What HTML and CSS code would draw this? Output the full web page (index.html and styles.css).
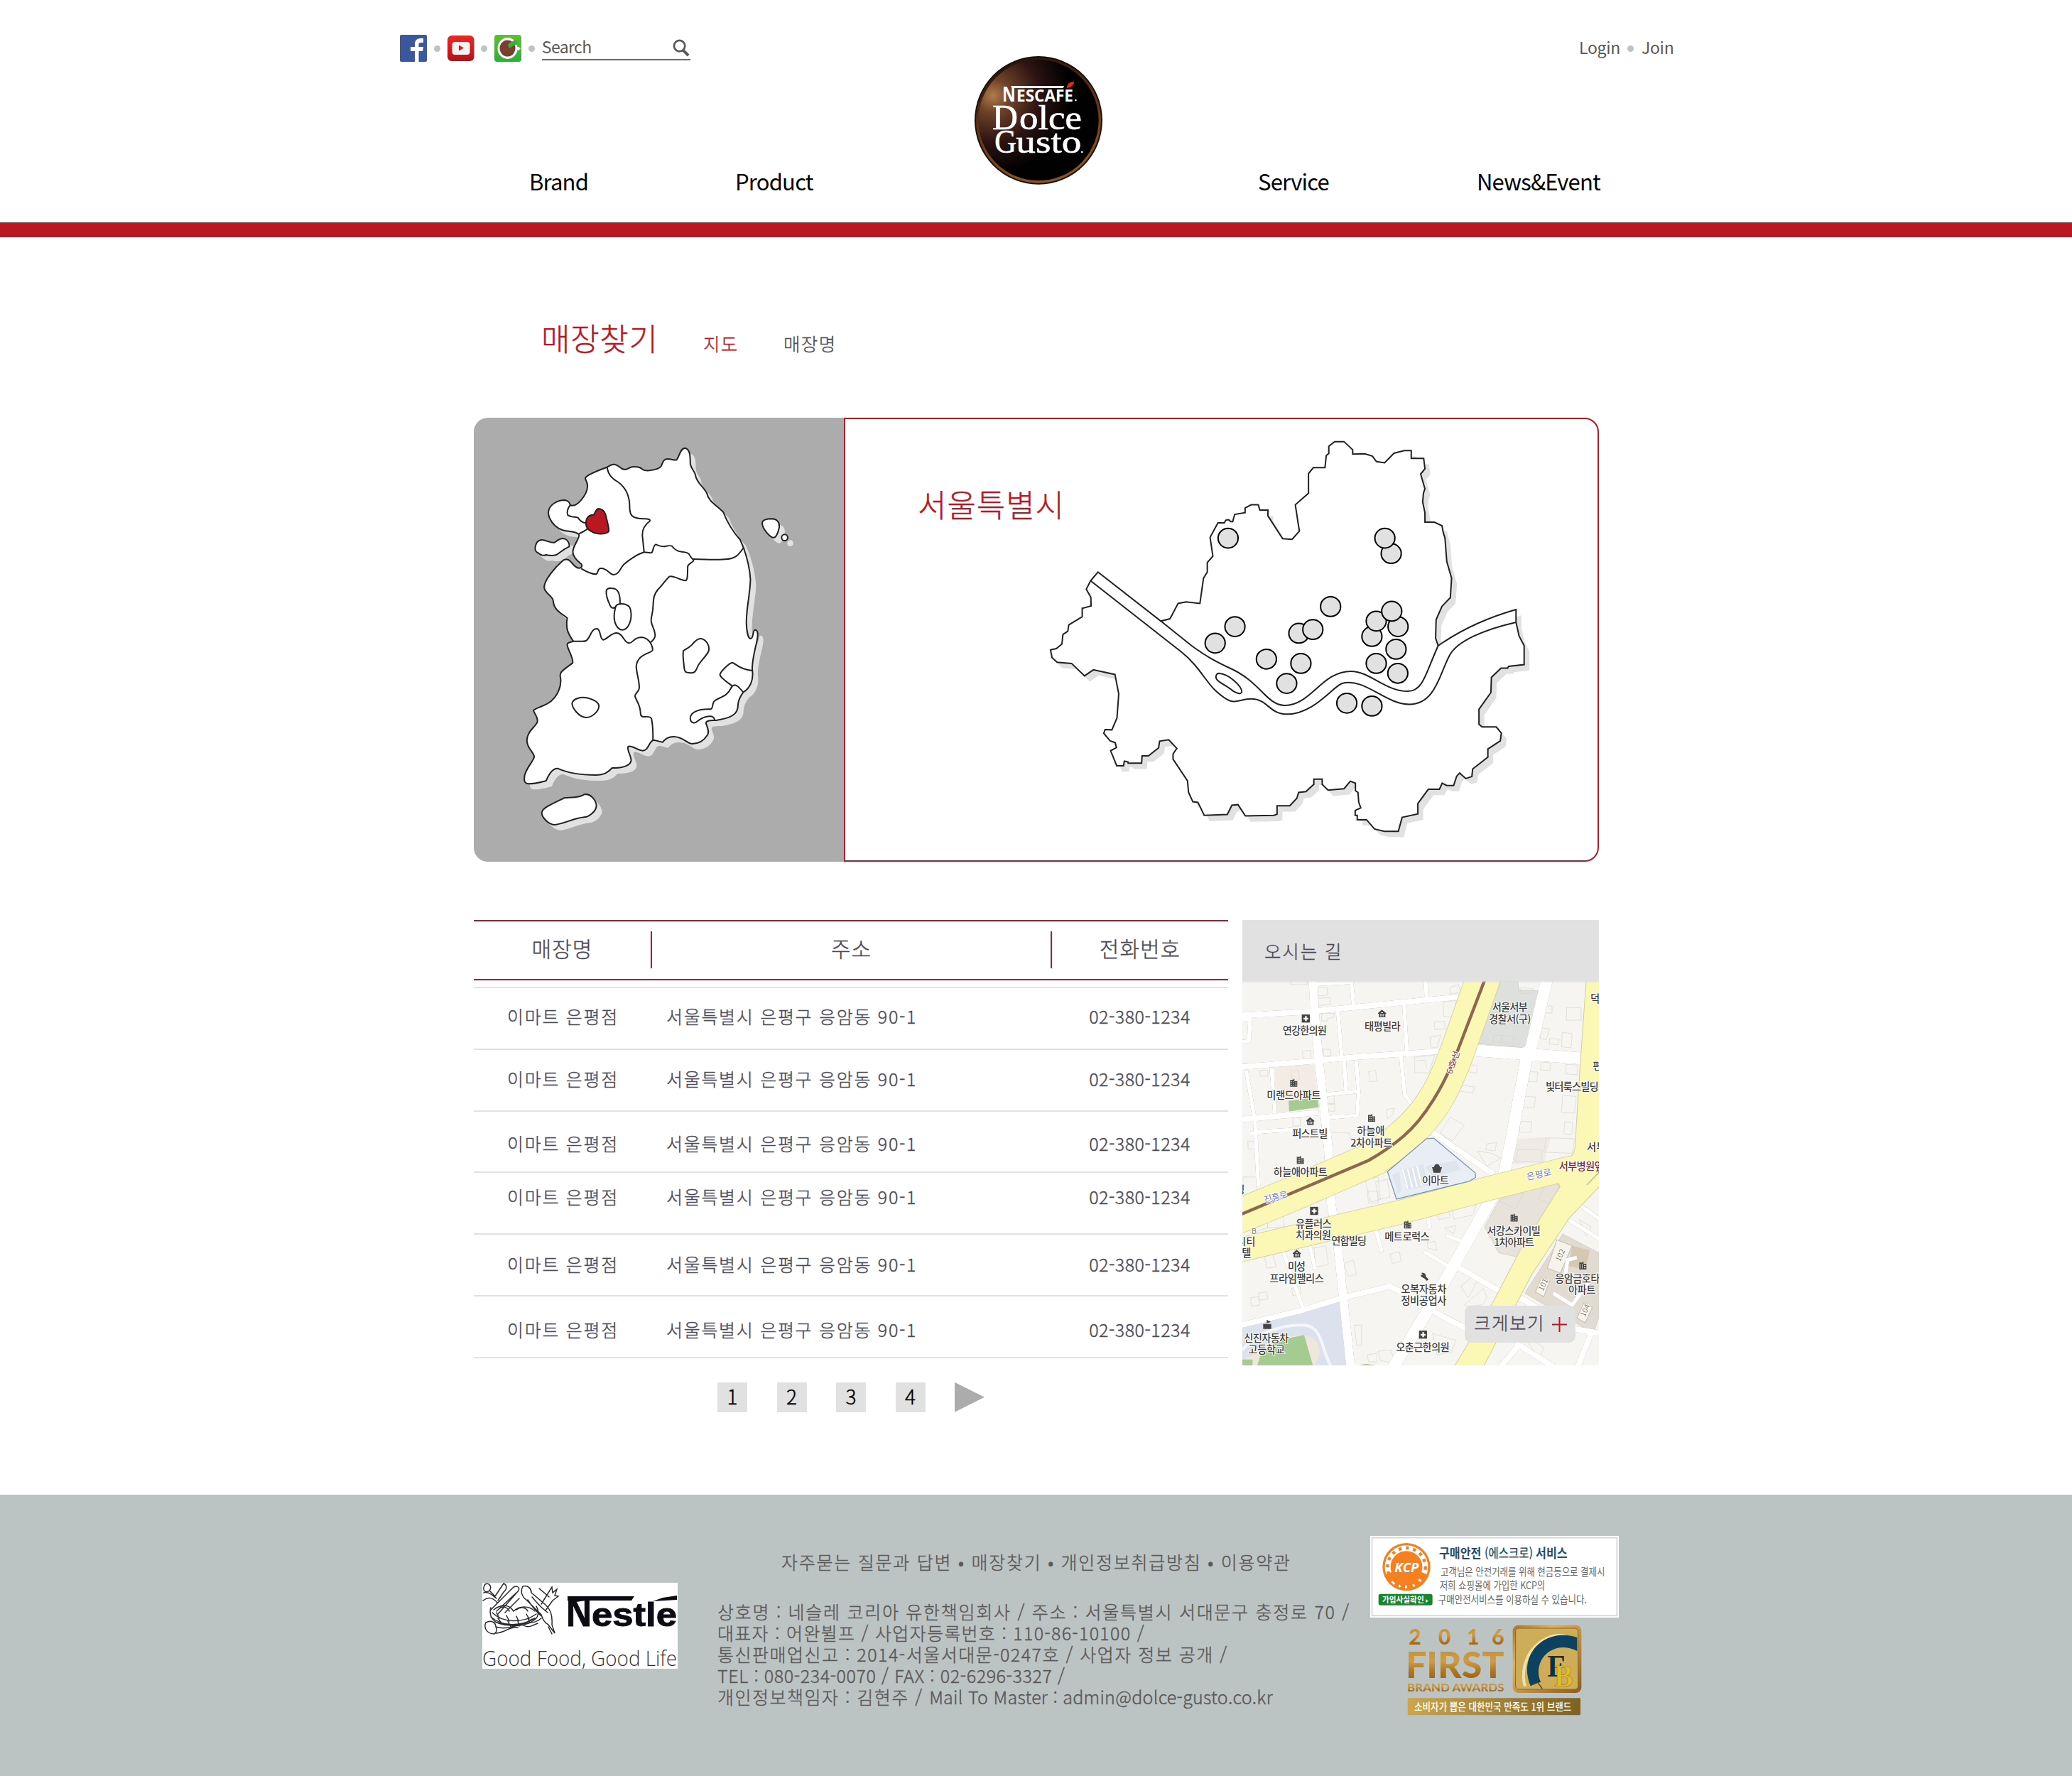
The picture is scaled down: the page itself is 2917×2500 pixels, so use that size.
FILE: index.html
```html
<!DOCTYPE html>
<html lang="ko">
<head>
<meta charset="utf-8">
<title>매장찾기 - NESCAFÉ Dolce Gusto</title>
<link rel="stylesheet" href="styles.css">
</head>
<body>
<header class="header">
  <div class="header-left">
    <div class="utility">
      <a class="social" href="#"><svg viewBox="0 0 38 38"><rect width="38" height="38" rx="2" fill="#3b579d"/><path d="M21 38V23h-6v-6h6v-4c0-5 3-8 8-8h4v6h-3c-3 0-3.500 1-3.500 3v3H33l-1 6h-5.500v15z" fill="#fff"/></svg></a>
      <i class="dot"></i>
      <a class="social" href="#"><svg viewBox="0 0 38 38"><defs><linearGradient id="yt" x2="0" y2="1"><stop stop-color="#e32c28"/><stop offset="1" stop-color="#b31217"/></linearGradient></defs><rect y="1" width="37.500" height="36" rx="6" fill="url(#yt)"/><rect x="6.500" y="10" width="25" height="18" rx="4" fill="#f3f1f1"/><path d="M16 14.500v8l7-4z" fill="#d3201f"/></svg></a>
      <i class="dot"></i>
      <a class="social" href="#"><svg viewBox="0 0 38 38"><defs><linearGradient id="cafe" x2="0" y2="1"><stop stop-color="#62bd35"/><stop offset="1" stop-color="#2fae3b"/></linearGradient></defs><rect width="38" height="38" rx="4" fill="url(#cafe)"/><path d="M30 17h4l3 2-3 3h-4z" fill="#fff"/><ellipse cx="18.500" cy="19" rx="14" ry="15" fill="#fff"/><ellipse cx="18.500" cy="19" rx="11" ry="11.500" fill="#7b3f31"/><path d="M19 14c4-4 7-6 12-7l1 7-5 1-6 4z" fill="#3fae35"/></svg></a>
      <i class="dot"></i>
      <div class="search"><span>Search</span><svg viewBox="0 0 26 26"><circle cx="10" cy="10" r="8" fill="none" stroke="#595757" stroke-width="2.800"/><path d="M15 16l8 8" stroke="#595757" stroke-width="4.200"/></svg></div>
    </div>
    <nav class="nav"><a class="brand" href="#">Brand</a><a class="product" href="#">Product</a></nav>
  </div>
  <svg class="logo" viewBox="97 57 540 543">
    <defs>
      <radialGradient id="ball" cx=".13" cy=".3" r=".62"><stop stop-color="#b07a4c"/><stop offset=".22" stop-color="#6f4328"/><stop offset=".6" stop-color="#2e1413"/><stop offset="1" stop-color="#020101"/></radialGradient>
      <linearGradient id="rim" x2=".3" y2="1"><stop stop-color="#1b0d09"/><stop offset=".5" stop-color="#5b3216"/><stop offset="1" stop-color="#8c5423"/></linearGradient>
    </defs>
    <ellipse cx="367" cy="328" rx="270" ry="271" fill="#1a0e0a"/>
    <ellipse cx="367" cy="328" rx="259" ry="260" fill="url(#ball)" stroke="url(#rim)" stroke-width="10"/>
    <g fill="#fff">
      <g font-family="Open Sans, sans-serif" font-weight="700"><text x="214" y="248" font-size="88" textLength="56" lengthAdjust="spacingAndGlyphs">N</text><text x="274" y="248" font-size="70" textLength="240" lengthAdjust="spacingAndGlyphs">ESCAFE</text></g>
      <path d="M250 183h226l-6 9H256z"/>
      <path d="M486 192c2-18 12-27 32-28-3 16-12 25-32 28z" fill="#e3261f"/>
      <circle cx="524" cy="243" r="4"/>
      <g font-family="Liberation Serif, serif" stroke="#fff" stroke-width="2">
        <text x="172" y="366" font-size="152" textLength="108" lengthAdjust="spacingAndGlyphs">D</text><text x="286" y="366" font-size="146" textLength="264" lengthAdjust="spacingAndGlyphs">olce</text>
        <text x="182" y="466" font-size="140" textLength="92" lengthAdjust="spacingAndGlyphs">G</text><text x="272" y="466" font-size="142" textLength="276" lengthAdjust="spacingAndGlyphs">usto</text>
      </g>
      <circle cx="551" cy="462" r="4"/>
    </g>
  </svg>
  <div class="header-right">
    <div class="account"><a href="#">Login</a><i class="dot"></i><a href="#">Join</a></div>
    <nav class="nav"><a class="service" href="#">Service</a><a class="news" href="#">News&amp;Event</a></nav>
  </div>
</header>

<main class="main">
  <div class="heading"><h1>매장찾기</h1><a class="active" href="#">지도</a><a href="#">매장명</a></div>

  <section class="finder">
    <svg class="korea" viewBox="19.600 504 1458.800 1875" preserveAspectRatio="none">
      <defs><g id="land">
        <path d="M545,713C555,705 565,700 575,701C595,705 598,723 615,723C630,722 632,711 650,711C672,711 677,715 685,722C692,728 700,728 712,727C735,724 750,720 758,709C765,695 765,678 785,678C800,679 815,687 820,681C830,668 833,633 852,632C872,636 873,665 873,700C878,722 890,730 893,745C895,775 925,795 938,822C945,860 980,875 1003,903C1020,950 1045,990 1070,1020L1083,1053C1100,1105 1108,1150 1110,1185C1110,1215 1106,1235 1104,1260C1097,1310 1094,1340 1094,1370C1095,1400 1100,1435 1110,1437C1124,1437 1118,1400 1128,1400C1140,1400 1142,1420 1134,1455C1117,1530 1116,1560 1118,1575C1122,1610 1110,1645 1082,1663C1070,1680 1063,1695 1061,1715C1062,1750 1045,1770 975,1782C955,1783 935,1780 935,1795C940,1812 950,1830 940,1845C925,1870 905,1881 880,1881C860,1881 845,1851 808,1851C785,1851 775,1860 764,1874C750,1872 735,1865 728,1866C710,1868 710,1910 685,1910C665,1908 640,1885 628,1893C622,1905 641,1935 640,1952C635,1975 605,1983 565,1983C550,2000 535,2013 500,2013C440,2013 395,2007 350,1985C330,1985 315,2010 305,2037C280,2045 255,2050 235,2050C218,2048 217,2035 220,2015C225,1985 258,1950 258,1935C255,1915 229,1900 229,1867C229,1830 260,1812 270,1790C275,1770 255,1748 255,1740C260,1730 300,1723 325,1700C350,1678 365,1640 362,1605C355,1580 365,1575 409,1540C415,1520 385,1475 388,1460C390,1452 405,1452 412,1448C395,1420 380,1400 388,1350C375,1335 335,1320 333,1280C333,1255 300,1250 297,1220C297,1190 340,1135 372,1106C395,1095 400,1112 410,1122C422,1137 430,1141 438,1139C450,1133 447,1122 438,1117C425,1105 410,1090 410,1070C410,1045 440,1010 434,997C415,975 375,995 340,960C320,940 312,915 314,900C318,870 350,852 378,852C395,854 397,865 400,873C425,885 467,830 468,793C468,770 456,765 460,757C470,742 510,727 545,713Z"/>
        <path d="M288,2170C290,2150 340,2130 375,2110C400,2107 440,2110 455,2095C480,2090 503,2120 503,2145C500,2170 470,2190 455,2191C415,2195 375,2218 340,2223C315,2223 285,2190 288,2170Z"/>
        <path d="M262,1050C265,1030 275,1020 290,1020C310,1022 325,1037 340,1030C355,1015 370,1012 378,1016C390,1020 397,1035 396,1048C370,1060 360,1075 345,1083C330,1088 315,1086 305,1083C295,1088 283,1083 275,1076C262,1070 261,1062 262,1050Z"/>
        <path d="M1157,950C1155,935 1175,931 1195,931C1215,932 1225,945 1224,965C1220,985 1212,1005 1205,1010C1190,1015 1155,970 1157,950Z"/>
        <ellipse cx="1245" cy="1010" rx="12" ry="13"/>
      </g></defs>
      <use href="#land" x="22" y="24" fill="#e1e1e1"/>
      <g class="ink">
        <use href="#land" fill="#fff"/>
        <path d="M400,873C390,885 385,905 390,915C400,925 420,922 430,926C437,935 443,948 462,948M434,995C440,988 460,985 467,972"/>
        <path d="M545,713C550,750 570,765 590,777C625,805 634,840 634,880C634,915 640,930 690,931C705,930 720,934 712,942C695,955 684,970 684,1000L691,1072"/>
        <path d="M443,1141C465,1155 485,1165 502,1165C512,1160 505,1142 520,1140C545,1138 555,1167 570,1167C595,1165 595,1140 612,1123C630,1105 665,1080 691,1072C705,1073 718,1077 722,1073C728,1060 728,1042 737,1039C750,1045 765,1050 775,1047C790,1043 800,1042 804,1050C815,1065 825,1069 840,1070C860,1072 868,1077 870,1083C876,1100 890,1103 885,1109C875,1120 863,1122 863,1133C862,1155 864,1190 855,1192C835,1192 805,1168 790,1175C775,1190 760,1215 745,1230C730,1250 728,1265 727,1290C726,1340 716,1345 719,1365C722,1385 737,1405 734,1428C732,1440 725,1445 718,1452"/>
        <path d="M885,1101C930,1103 980,1104 1010,1102C1055,1100 1065,1080 1083,1053"/>
        <path d="M412,1448C440,1448 455,1450 462,1446C480,1435 480,1395 505,1395C522,1398 515,1440 530,1442C545,1440 560,1413 583,1413C610,1415 610,1455 632,1456C648,1455 650,1432 680,1431C700,1432 722,1450 725,1485C720,1500 663,1500 660,1555C662,1590 672,1610 672,1645C670,1665 655,1665 655,1680C660,1700 677,1715 677,1755C680,1780 712,1755 720,1775C727,1810 726,1840 726,1866"/>
        <path d="M579,1303C568,1312 560,1307 556,1295C545,1270 541,1245 542,1235C545,1222 560,1222 575,1226C595,1235 597,1262 596,1290"/>
        <path d="M578,1305C580,1290 600,1288 612,1291C635,1298 638,1305 640,1335C640,1370 625,1400 605,1400C585,1398 572,1370 573,1340C573,1325 576,1315 578,1305Z"/>
        <path d="M846,1488C860,1478 872,1472 880,1462C895,1442 905,1436 915,1437C935,1440 950,1465 946,1488C935,1515 912,1530 902,1555C893,1578 890,1582 873,1582C850,1580 851,1575 849,1560C845,1520 842,1505 846,1488Z"/>
        <path d="M1118,1572C1065,1567 1050,1540 1039,1538C1028,1538 990,1578 990,1590C992,1602 1020,1622 1037,1636"/>
        <path d="M1082,1663C1070,1650 1060,1633 1048,1633C1032,1635 1035,1655 1015,1672C995,1688 970,1693 965,1705C960,1715 962,1733 953,1735C900,1733 872,1750 873,1775C875,1795 890,1797 902,1785C925,1765 965,1755 969,1780"/>
        <path d="M407,1710C412,1690 440,1682 465,1687C500,1697 513,1708 513,1722C512,1745 485,1770 463,1770C435,1770 407,1730 407,1710Z"/>
        <path class="picked" d="M462,955C460,925 475,913 492,914C500,905 500,888 512,888C535,892 540,910 543,930C548,955 555,975 551,985C543,994 525,995 510,994C485,990 464,975 462,955Z"/>
      </g>
    </svg>
    <div class="city">
      <h2>서울특별시</h2>
      <svg class="seoul" viewBox="-1428 24.500 2965.200 1521.400" preserveAspectRatio="none">
        <defs><path id="seoul-land" d="M-432,552L-184,721L-148,713L-116,660L-85,655L-30,660L-16,573L-1,552V519L21,497L10,432L41,382H66L72,373L80,371L87,373L90,378H99L107,353L148,347V331L172,320H200L206,338H238V358L296,437L333,439L362,411L346,320L398,280V212L417,192H463L468,150L478,143V118L501,102H538L572,130V145L620,144L650,152L666,171L698,175L735,142L776,133H803V160H852L857,196L840,214L857,265L851,280L848,310L857,348V380H894L924,392L929,415L936,435L943,515L962,573L957,640L924,670L901,716L899,780L909,806C1000,750 1100,710 1216,681V725L1228,772L1248,806V871L1187,877L1183,883H1157L1119,915L1117,967L1070,1025V1077L1082,1086H1138L1158,1107L1154,1134L1105,1162V1190L1045,1231L1042,1257L1018,1264L994,1245L982,1256L970,1288H943L925,1280L914,1301H870L829,1350V1386L767,1398L752,1446H697L658,1438L627,1406H590V1391H582V1374L604,1365L596,1346L593,1312L583,1306V1280L563,1273L538,1299L475,1304L452,1284V1266H419V1284L388,1309L359,1312L352,1332L324,1358H274V1387L262,1391L149,1393L120,1354L96,1356L78,1388L-13,1391L-38,1346L-58,1344L-75,1311L-79,1272L-136,1197V1179L-121,1160L-153,1130L-189,1135L-193,1158L-233,1186H-258L-260,1211H-313L-314,1206L-328,1204L-331,1220H-358L-382,1168L-359,1157L-364,1140L-384,1134L-409,1108L-404,1095L-377,1096L-357,1055L-350,972L-365,905L-450,889L-485,910L-536,867L-593,863L-613,847L-619,820L-596,816L-574,800L-570,767L-551,756L-547,734L-494,706V677L-459,669L-460,639L-478,611L-461,582Z"/></defs>
        <use href="#seoul-land" x="21" y="20" fill="#e1e1e1"/>
        <g class="ink">
          <use href="#seoul-land" fill="#fff"/>
          <path d="M-184,721L-60,808C0,845 30,860 85,882C210,930 230,1010 305,1012C410,1010 450,894 565,894C640,894 700,963 790,963C850,963 860,900 909,806"/>
          <path d="M-461,582L-104,827C-40,870 -10,925 28,958C110,1025 110,989 173,989C240,990 240,1042 315,1042C420,1040 490,950 530,936C620,915 700,1008 795,1008C900,1008 915,900 955,838C985,790 1090,750 1216,725"/>
          <path d="M45,901C85,904 135,945 135,965C132,976 110,970 90,955C65,938 30,928 33,912C35,904 39,901 45,901Z"/>
        </g>
        <g class="pins">
          <ellipse cx="81" cy="435" rx="39.500" ry="34"/><ellipse cx="724" cy="488" rx="39.500" ry="34"/><ellipse cx="699" cy="435" rx="39.500" ry="34"/>
          <ellipse cx="485" cy="671" rx="39.500" ry="34"/><ellipse cx="108" cy="740" rx="39.500" ry="34"/><ellipse cx="30" cy="797" rx="39.500" ry="34"/>
          <ellipse cx="360" cy="763" rx="39.500" ry="34"/><ellipse cx="415" cy="750" rx="39.500" ry="34"/><ellipse cx="232" cy="852" rx="39.500" ry="34"/>
          <ellipse cx="368" cy="867" rx="39.500" ry="34"/><ellipse cx="312" cy="936" rx="39.500" ry="34"/><ellipse cx="648" cy="774" rx="39.500" ry="34"/>
          <ellipse cx="665" cy="721" rx="39.500" ry="34"/><ellipse cx="751" cy="740" rx="39.500" ry="34"/><ellipse cx="726" cy="687" rx="39.500" ry="34"/>
          <ellipse cx="743" cy="818" rx="39.500" ry="34"/><ellipse cx="665" cy="867" rx="39.500" ry="34"/><ellipse cx="750" cy="901" rx="39.500" ry="34"/>
          <ellipse cx="549" cy="1004" rx="39.500" ry="34"/><ellipse cx="648" cy="1014" rx="39.500" ry="34"/>
        </g>
      </svg>
    </div>
  </section>

  <section class="results">
    <div class="stores">
      <div class="store-head"><span>매장명</span><span>주소</span><span>전화번호</span></div>
      <div class="store-rows">
        <div class="store r1"><span>이마트 은평점</span><span>서울특별시 은평구 응암동 90-1</span><span>02-380-1234</span></div>
        <div class="store r2"><span>이마트 은평점</span><span>서울특별시 은평구 응암동 90-1</span><span>02-380-1234</span></div>
        <div class="store r3"><span>이마트 은평점</span><span>서울특별시 은평구 응암동 90-1</span><span>02-380-1234</span></div>
        <div class="store r4"><span>이마트 은평점</span><span>서울특별시 은평구 응암동 90-1</span><span>02-380-1234</span></div>
        <div class="store r5"><span>이마트 은평점</span><span>서울특별시 은평구 응암동 90-1</span><span>02-380-1234</span></div>
        <div class="store r6"><span>이마트 은평점</span><span>서울특별시 은평구 응암동 90-1</span><span>02-380-1234</span></div>
      </div>
      <div class="pages"><a href="#">1</a><a href="#">2</a><a href="#">3</a><a href="#">4</a><i class="next"></i></div>
    </div>

    <aside class="directions">
      <h3>오시는 길</h3>
      <div class="street">
        <svg viewBox="27 303 1506 1622" preserveAspectRatio="none">
          <defs>
            <g id="streets" fill="none">
              <path class="w38" d="M325,290L332,430L350,640L368,800L390,1010L402,1240L430,1420L452,1630L485,1940"/>
              <path class="w26" d="M10,449L310,432L700,394L940,370M10,667L330,640L520,622L860,600M10,888L350,858M10,1758L280,1692L450,1640L650,1592L730,1630"/>
              <path class="w18" d="M335,316L485,308M486,290L497,410M800,290L805,378M430,430L447,625M710,400L722,605M697,620L712,780L740,820M43,680L80,890L95,1170M150,670L165,862M508,640L518,768L512,870L385,880M457,640L465,770M380,782L520,768M88,940L240,930M27,465L60,465L55,555L27,560M95,945L60,945"/>
              <path class="w18" d="M198,1440L285,1690M312,1420L335,1520M590,1350L616,1445M808,1290L820,1350M795,1445L895,1505M888,1377L955,1402M1455,1250L1540,1310M1405,1310L1540,1395M1340,1620L1420,1670L1500,1560M1390,1550L1400,1480L1440,1470"/>
              <path class="w26" d="M820,935L1090,1120M930,1505L1110,1610M1200,1640L1420,1770L1540,1790M835,1698L1060,1815M1180,1830L1340,1930M1200,1835L1110,1940M1500,1790L1440,1940"/>
              <path class="w46" d="M1315,290L1250,570L1225,640L1165,960L1130,1130M1085,1210L910,1520L800,1710L660,1940M1000,595L1210,610L1470,630"/>
            </g>
            <g id="apt"><path d="M0 33V4h14V0h4v10h12v23z" fill="#444"/><path d="M4 9h3v4H4zm7 0h3v4h-3zM4 17h3v4H4zm7 0h3v4h-3zM4 25h3v4H4zm7 0h3v4h-3zm9-10h3v4h-3zm6 0h2v4h-2zm-6 9h3v4h-3zm6 0h2v4h-2z" fill="#fff"/></g>
            <g id="house"><path d="M0 15 16 1l18 14v3h-3v15H4V18H0z" fill="#444"/><path d="M13 12h8v3h-8zM10 19h3v10h-3zm6 0h3v10h-3zm6 0h3v10h-3z" fill="#fff"/></g>
            <g id="clinic"><path d="M0 0h34v34H0z" fill="#444"/><path d="M14 7h7v7h7v7h-7v7h-7v-7H7v-7h7z" fill="#fff"/></g>
          </defs>
          <rect x="27" y="303" width="1506" height="1622" fill="#f6f5f1"/>
          <path d="M1118,303H1190L1195,340L1285,345L1240,560L1205,585L1020,567Z" fill="#dde0dc" stroke="#c3c8c4" stroke-width="2"/>
          <path d="M165,665L330,655L350,840L165,860Z" fill="#f3ece5"/>
          <path d="M222,808L345,795L350,835L225,853Z" fill="#a6cb92"/>
          <path d="M1130,1195L1350,1148L1367,1170L1200,1470L1110,1450L1050,1340Z" fill="#e7e3da" stroke="#cbc6bc" stroke-width="2"/>
          <path d="M1380,1370L1533,1450V1720L1510,1790L1220,1620Z" fill="#e1dbd1" stroke="#cbc6bc" stroke-width="2"/>
          <path d="M1190,970L1330,960L1300,1070L1160,1075Z" fill="#efeae4"/>
          <path d="M27,1755L440,1655L485,1925H27Z" fill="#dce2ed"/>
          <path d="M27,1860C80,1790 200,1750 290,1755C370,1765 360,1860 400,1925" fill="none" stroke="#f4f6fa" stroke-width="12"/>
          <path d="M27,1905L100,1860L150,1810L290,1797C360,1810 370,1880 330,1925H27Z" fill="#eee7dc"/>
          <path d="M90,1925L112,1860L200,1815L288,1797L325,1925Z" fill="#a6cb92"/>
          <path d="M27,1900H70V1925H27ZM520,1925L550,1918L590,1925Z" fill="#a6cb92"/>
          <g class="plots">
            <path d="M345,332L385,330L387,362L347,366ZM347,376L397,372L399,402L350,406ZM230,303V318H300V303M362,440H415V455L385,462V472H362ZM280,600L315,595L318,628L285,632ZM370,590L400,592L402,618H370ZM230,682L265,680L268,720L240,722ZM100,680H135V705H102ZM560,685L590,680L595,725L565,728ZM755,625L840,615L815,690L755,690ZM760,640L800,637L805,670M838,475L880,472L884,505L840,508ZM875,392L930,385L915,455L878,452ZM820,540L865,532L850,583L823,582ZM905,330L940,318L948,350L905,358ZM945,740L1008,750L1000,775L943,768ZM980,655L1020,660L1015,692L978,685ZM905,877L965,910L915,977L862,945ZM1305,408H1335V438H1305ZM1397,415H1458V468H1395ZM1378,520L1420,524L1415,585L1375,580ZM1290,500L1325,505L1310,550L1285,545ZM1325,545L1365,548L1360,572L1323,568ZM1395,655L1445,657L1440,698L1392,695ZM1290,645L1330,648L1325,680L1285,678ZM1240,685L1275,687L1270,728L1236,726ZM1220,790L1265,792L1260,838L1215,835ZM1380,785L1437,790L1430,860L1375,858ZM1200,895L1250,897L1245,942L1197,940ZM1388,897L1422,900L1418,950L1385,948ZM1310,965L1430,968L1420,1030L1300,1025ZM1090,530L1125,533L1120,562L1085,560ZM1125,530L1175,540L1170,570L1122,566ZM1200,330L1255,335V355H1202ZM635,845L668,840L662,865L640,885ZM405,940L480,945L485,975M50,980H85V1012H52ZM385,790L415,787V820H388ZM388,825L418,822V852H390ZM240,880H272V915H240Z"/>
            <path d="M30,1130H88V1215H30ZM60,1320L130,1300L135,1345L60,1365ZM130,1312L200,1295L205,1340L135,1345ZM230,1270L300,1255M545,1140L600,1130L610,1225L570,1235ZM590,1150L640,1140L650,1215L600,1225ZM555,1190H600V1240H560ZM850,1270L895,1262L905,1300L855,1310ZM910,1255L1020,1230L1000,1290L920,1308ZM650,1455L690,1445L698,1485L660,1495ZM808,1405L840,1402L850,1440L810,1430ZM880,1345L930,1335L920,1370ZM455,1495L495,1480L510,1540L475,1550ZM330,1430L380,1420L390,1500L335,1510ZM120,1465L155,1455L170,1510L130,1515ZM235,1600L270,1590L275,1625L240,1630ZM500,1755H530V1840H510ZM555,1880L595,1875V1910H560ZM600,1865L655,1860L670,1915L610,1905ZM965,1670L1045,1600L1060,1640L1040,1670L975,1675ZM950,1590L1000,1550L1020,1570L980,1640ZM830,1790L930,1820L910,1870L850,1880ZM1210,1790L1300,1850L1280,1900ZM1020,1020L1080,1030L1120,1050L1060,1085ZM1060,990L1100,985L1095,1020L1055,1015ZM1180,1065L1190,1015L1290,1015L1290,1065ZM1110,1230L1215,1195L1180,1265ZM1450,1310L1500,1340L1480,1380ZM1300,1180L1350,1150L1366,1172L1330,1245L1275,1220ZM62,1640L95,1635L100,1670L65,1675ZM95,1620L130,1615L135,1645L100,1650Z"/>
          </g>
          <path d="M1355,1395L1420,1420L1370,1535L1315,1515ZM1290,1555L1325,1570L1300,1635L1265,1615ZM1470,1660L1505,1680L1475,1745L1440,1725Z" fill="#f6f3ee" stroke="#c9bda8" stroke-width="3"/>
          <path d="M1420,1420L1495,1440L1475,1520L1405,1505Z" fill="#d5c7b1"/>
          <use href="#streets" class="casing"/>
          <use href="#streets" class="fillroad"/>
          <g fill="none" stroke="#d3cf9d"><path stroke-width="148" d="M1052,270L935,600C890,720 840,850 700,965C610,1040 560,1060 560,1062L230,1205L0,1300"/><path stroke-width="104" d="M0,1442L430,1340L700,1277L1060,1180L1400,1095L1540,1070"/></g>
          <path d="M1480,290L1455,640L1432,1000C1430,1030 1420,1045 1400,1050V1145H1355L1369,1170L1200,1440L1090,1650L910,1950H1035L1250,1540L1410,1300L1540,1165V290Z" fill="#fbf7b4" stroke="#d3cf9d" stroke-width="3"/>
          <g fill="none" stroke="#fbf7b4"><path stroke-width="143" d="M1052,270L935,600C890,720 840,850 700,965C610,1040 560,1060 560,1062L230,1205L0,1300"/><path stroke-width="99" d="M0,1442L430,1340L700,1277L1060,1180L1400,1095L1540,1070"/></g>
          <path d="M1052,295L935,600C880,740 800,880 705,960Q640,1015 560,1060L230,1200L20,1288" fill="none" stroke="#8b6950" stroke-width="13"/>
          <path d="M805,968L835,966L1010,1112L1012,1132L985,1148L678,1223L640,1107Z" fill="#e9eef5" stroke="#7a96b0" stroke-width="4"/>
          <path d="M700,1100L790,1075L810,1165L720,1185ZM800,1085L930,1060L950,1100L830,1130ZM660,1120L690,1110L700,1190L685,1200Z" fill="#dfe5ed"/>
          <path d="M705,1100L725,1180M725,1095L745,1175M745,1090L765,1172M765,1085L785,1168" stroke="#fff" stroke-width="6"/>
          <path d="M1533,1110L1482,1163" stroke="#b9b69a" stroke-width="4"/>
          <use href="#clinic" x="278" y="444"/><use href="#house" x="600" y="423"/><use href="#apt" x="229" y="716"/><use href="#house" x="297" y="877"/><use href="#apt" x="558" y="864"/><use href="#apt" x="257" y="1041"/><use href="#clinic" x="313" y="1256"/><use href="#apt" x="710" y="1314"/><use href="#house" x="240" y="1436"/><use href="#apt" x="1160" y="1285"/><use href="#apt" x="1450" y="1487"/><use href="#clinic" x="773" y="1778"/>
          <path d="M830,1090H868L862,1110H836ZM838,1090C840,1072 858,1072 860,1090" fill="#444" stroke="#444" stroke-width="3"/>
          <path d="M783,1535A14 14 0 0 1 802,1550L814,1562L806,1568L794,1556A14 14 0 0 1 780,1542L790,1545Z" fill="#444"/>
          <path d="M115,1750H149V1771H115ZM130,1750V1732L148,1742L133,1746" fill="#444"/>
          <g class="place">
            <text x="197" y="529" textLength="187">연강한의원</text><text x="543" y="511" textLength="152">태평빌라</text>
            <text x="1082" y="429" textLength="150">서울서부</text><text x="1068" y="479" textLength="178">경찰서(구)</text>
            <text x="1497" y="394">덕</text><text x="1507" y="679">편</text><text x="1308" y="766" textLength="224">빛터룩스빌딩</text>
            <text x="130" y="801" textLength="228">미랜드아파트</text><text x="238" y="964" textLength="150">퍼스트빌</text>
            <text x="511" y="951" textLength="117">하늘애</text><text x="484" y="1001" textLength="177">2차아파트</text>
            <text x="1482" y="1020">서부</text><text x="158" y="1126" textLength="229">하늘애아파트</text><text x="785" y="1162" textLength="115">이마트</text>
            <text x="-2" y="1200">딩</text><text x="252" y="1342" textLength="152">유플러스</text><text x="252" y="1392" textLength="150">치과의원</text>
            <text x="403" y="1416" textLength="149">연합빌딩</text><text x="628" y="1398" textLength="190">메트로럭스</text>
            <text x="3" y="1417">시티</text><text x="25" y="1466">텔</text><text x="1060" y="1372" textLength="227">서강스카이빌</text><text x="1090" y="1420" textLength="170">1차아파트</text>
            <text x="219" y="1524" textLength="75">미성</text><text x="142" y="1573" textLength="230">프라임팰리스</text>
            <text x="697" y="1618" textLength="192">오복자동차</text><text x="697" y="1668" textLength="192">정비공업사</text>
            <text x="1348" y="1574" textLength="227">응암금호타운</text><text x="1404" y="1622" textLength="115">아파트</text>
            <text x="34" y="1826" textLength="189">신진자동차</text><text x="52" y="1874" textLength="155">고등학교</text><text x="676" y="1865" textLength="226">오춘근한의원</text>
            <text class="hospital" x="1364" y="1102" textLength="226">서부병원앞역</text>
            <text class="road" transform="translate(122 1241) rotate(-15)" textLength="102">진흥로</text><text class="road" transform="translate(1231 1143) rotate(-12)" textLength="106">은평로</text>
            <text class="line" transform="translate(912 698) rotate(-70)" textLength="100">6호선</text>
            <text class="block" transform="translate(1369 1489) rotate(-65)">102</text><text class="block" transform="translate(1297 1613) rotate(-65)">101</text><text class="block" transform="translate(1474 1722) rotate(-65)">104</text><text class="block" x="66" y="1370">B</text>
          </g>
          <rect x="27" y="303" width="1506" height="6" fill="#ddd" opacity=".6"/>
        </svg>
        <a class="enlarge" href="#"><span>크게보기</span><svg viewBox="0 0 21 21"><path d="M10.500 0v21M0 10.500h21" stroke="#b91822" stroke-width="2"/></svg></a>
      </div>
    </aside>
  </section>
</main>

<footer class="footer">
  <svg class="nestle" viewBox="0 0 275 121">
    <rect width="275" height="121" fill="#fff"/>
    <g fill="none" stroke="#2a2a2e" stroke-width="1.500" stroke-linecap="round">
      <path d="M4 2c6-3 10 4 6 9l8 8M4 2c-5 8 0 14 6 9M18 19 30 1c5 2 5 8 0 12l-8 12M2 14c8-2 12 4 18 8M1 25c8-6 14-4 20 3M12 38 42 8c4-5 12-3 9 3L22 44M20 40 48 14M32 42l20-20"/>
      <path d="M57 5c8-2 12 4 12 9l20 17c8 7 10 16 9 28l4 12-9-12c-6-3-8-8-10-14L62 24c-6-4-9-12-5-19zM64 24c6 10 14 18 18 22M70 20c8 10 14 16 22 22M83 30l15-24 1 8 6-5-3 9 5 1-8 6-10 14M93 62l5 10M80 8l14 12"/>
      <path d="M12 35c-3 10 2 20 12 22 18 6 38 4 48-4 8-4 8-14 4-20M14 42c14 14 42 16 62 2M12 48c16 14 42 14 62 2M18 55c16 8 38 6 52-4M16 38c10-8 22-8 28 2 8-8 22-8 30 0M24 36c6-4 12-1 14 4M48 38c6-5 14-3 16 2M22 50l6 8M36 54l4 8M50 54l2 7M64 50l3 6M20 42l4 8M34 46l4 8M48 47l3 7M62 44l4 7"/>
      <path d="M5 56c8-4 14 0 14 6 12 4 24 0 38-4 12-2 20-2 26-8M5 56c-3 6 0 16 12 16 4-4 4-6 2-10M18 71c14 0 20-10 32-8M58 60c6 4 14 0 20-3"/>
    </g>
    <g fill="#0d0b13" stroke="#0d0b13" font-family="Liberation Sans, sans-serif" font-weight="700"><text x="118" y="61" font-size="57" textLength="36" lengthAdjust="spacingAndGlyphs">N</text><text x="154" y="61" font-size="47" textLength="120" lengthAdjust="spacingAndGlyphs">estle</text></g>
    <path d="M120 19h94l-4 6h-64l-14 2-12-2zM240 26l14-5 20-3v6z" fill="#0d0b13"/>
    <text x="0" y="117" font-family="Open Sans, sans-serif" font-size="30" fill="#333" textLength="274" lengthAdjust="spacingAndGlyphs">Good Food, Good Life</text>
  </svg>
  <div class="company">
    <p class="policy">자주묻는 질문과 답변 • 매장찾기 • 개인정보취급방침 • 이용약관</p>
    <address>
      <span class="l1">상호명 : 네슬레 코리아 유한책임회사 / 주소 : 서울특별시 서대문구 충정로 70 /</span>
      <span class="l2">대표자 : 어완뷜프 / 사업자등록번호 : 110-86-10100 /</span>
      <span class="l3">통신판매업신고 : 2014-서울서대문-0247호 / 사업자 정보 공개 /</span>
      <span class="l4">TEL : 080-234-0070 / FAX : 02-6296-3327 /</span>
      <span class="l5">개인정보책임자 : 김현주 / <span class="mail">Mail To Master : admin@dolce-gusto.co.kr</span></span>
    </address>
  </div>
  <div class="badges">
    <svg class="kcp" viewBox="57 66 1050 345">
      <rect x="57" y="66" width="1050" height="345" fill="#fff"/><rect x="65" y="74" width="1034" height="329" fill="none" stroke="#d3d5d5" stroke-width="5"/>
      <circle cx="210" cy="197" r="101" fill="#f5801f"/><circle cx="210" cy="197" r="79" fill="none" stroke="#fff" stroke-width="24"/>
      <path d="M123 228a92 92 0 0 0 174 0l-26-10a64 64 0 0 1-122 0z" fill="#f5801f"/>
      <circle cx="210" cy="197" r="80" fill="none" stroke="#f5801f" stroke-width="13" stroke-dasharray="13 18"/>
      <g font-family="Open Sans, sans-serif" font-weight="700"><text x="160" y="219" font-size="52" font-style="italic" fill="#fff" textLength="102" lengthAdjust="spacingAndGlyphs">KCP</text></g>
      <path d="M148 258l12 12M178 274l6 8M208 275v12M238 270l6 10M262 250l10 8" stroke="#fff" stroke-width="8"/>
      <rect x="92" y="311" width="228" height="48" rx="9" fill="#19862f"/>
      <g font-family="Noto Sans CJK KR, sans-serif">
        <text x="108" y="347" font-size="34" font-weight="700" fill="#fff" textLength="176" lengthAdjust="spacingAndGlyphs">가입사실확인</text><path d="M292 333l10 8-10 8z" fill="#fff"/>
        <g fill="#1d4f70" font-size="53"><text x="348" y="159" font-weight="700" textLength="178" lengthAdjust="spacingAndGlyphs">구매안전</text><text x="540" y="159" font-weight="500" textLength="204" lengthAdjust="spacingAndGlyphs">(에스크로)</text><text x="756" y="159" font-weight="700" textLength="134" lengthAdjust="spacingAndGlyphs">서비스</text></g>
        <g fill="#666" font-size="43" font-weight="400"><text x="354" y="233" textLength="694" lengthAdjust="spacingAndGlyphs">고객님은 안전거래를 위해 현금등으로 결제시</text><text x="350" y="291" textLength="446" lengthAdjust="spacingAndGlyphs">저희 쇼핑몰에 가입한 KCP의</text><text x="344" y="350" textLength="628" lengthAdjust="spacingAndGlyphs">구매안전서비스를 이용하실 수 있습니다.</text></g>
      </g>
    </svg>
    <svg class="award" viewBox="214 440 738 384">
      <defs><linearGradient id="gold" x2="0" y2="1"><stop stop-color="#c18a30"/><stop offset=".45" stop-color="#cf9c45"/><stop offset=".65" stop-color="#b17a26"/><stop offset="1" stop-color="#8b5516"/></linearGradient><linearGradient id="frame" x2="1" y2="1"><stop stop-color="#a9742e"/><stop offset=".3" stop-color="#d9b063"/><stop offset="1" stop-color="#8e5a1c"/></linearGradient><linearGradient id="strip"><stop stop-color="#cda64c"/><stop offset="1" stop-color="#7d6124"/></linearGradient></defs>
      <g fill="url(#gold)" font-family="Lato, sans-serif" font-weight="700">
        <g font-size="90" font-weight="900"><text x="221" y="524">2</text><text x="346" y="524">0</text><text x="466" y="524">1</text><text x="572" y="524">6</text></g>
        <text x="208" y="664" font-size="155" font-weight="900" textLength="416" lengthAdjust="spacingAndGlyphs">FIRST</text>
        <text x="214" y="722" font-size="45" font-weight="900" textLength="410" lengthAdjust="spacingAndGlyphs">BRAND AWARDS</text>
      </g>
      <rect x="660" y="442" width="290" height="286" rx="24" fill="url(#frame)"/><rect x="672" y="455" width="264" height="258" rx="14" fill="#cdad57" stroke="#8d6426" stroke-width="3"/>
      <path d="M712 700C680 590 770 470 880 487" fill="none" stroke="#efe0ac" stroke-width="12"/>
      <path d="M932 494C800 450 680 560 735 697L778 682C740 590 830 500 932 551Z" fill="#0c4260"/>
      <path d="M735 697l30-14 20 28" fill="none" stroke="#443" stroke-width="4"/>
      <g font-family="Liberation Serif, serif" font-weight="700"><text x="806" y="660" font-size="136" fill="#0b3048" textLength="76" lengthAdjust="spacingAndGlyphs">F</text><text x="836" y="701" font-size="130" fill="#e0bd22" stroke="#a58420" stroke-width="2" textLength="78" lengthAdjust="spacingAndGlyphs">B</text></g>
      <rect x="216" y="750" width="730" height="72" rx="4" fill="url(#strip)"/>
      <text x="244" y="802" font-family="Noto Sans CJK KR, sans-serif" font-size="43" font-weight="500" fill="#fff" textLength="664" lengthAdjust="spacingAndGlyphs">소비자가 뽑은 대한민국 만족도 1위 브랜드</text>
    </svg>
  </div>
</footer>
</body>
</html>
```
FILE: styles.css
```css
* { box-sizing: border-box; margin: 0; padding: 0; }
body { width: 2917px; height: 2500px; background: #fff; font-family: "Noto Sans CJK KR", "Noto Sans", sans-serif; font-weight: 300; color: #4c4a59; white-space: nowrap; }
a { color: inherit; text-decoration: none; }
svg { display: block; }

/* header */
.header { display: flex; height: 334px; border-bottom: 21px solid #b91822; }
.header-left { width: 1372px; padding: 49px 0 0 563px; }
.header-right { flex: 1; padding: 49px 0 0 220px; }
.utility, .account { display: flex; align-items: center; height: 38px; color: #595757; font-size: 23px; font-weight: 400; letter-spacing: -.6px; }
.social, .social svg { width: 38px; height: 38px; }
.dot { width: 9px; height: 9px; margin: 0 9.800px; border-radius: 50%; background: #bcc4c3; }
.search { display: flex; justify-content: space-between; width: 209px; height: 34px; border-bottom: 2px solid #6a6868; line-height: 28px; }
.search svg { width: 25px; height: 25px; margin-top: 4px; }
.account { padding-left: 451px; line-height: 34px; letter-spacing: -.3px; }
.account a { height: 38px; }
.account .dot { margin: 0 10.500px; }
.nav { display: flex; margin-top: 148px; color: #000; font-size: 31px; font-weight: 400; line-height: 40px; letter-spacing: -.8px; }
.brand { width: 290px; margin-left: 182px; }
.service { width: 308px; margin-left: -1px; }
.logo { width: 180px; height: 181px; margin-top: 79px; }

.heading, .city h2, .stores, .directions h3, .enlarge span, .company { -webkit-text-stroke: .4px currentColor; }

/* heading and maps */
.main { width: 1584px; margin-left: 667px; }
.heading { display: flex; align-items: baseline; height: 254px; padding: 111px 0 0 95px; font-size: 25.500px; letter-spacing: 1.4px; }
.heading h1 { width: 228px; font-size: 44px; font-weight: 300; line-height: 60px; color: #b91822; letter-spacing: .7px; }
.heading a { width: 113px; }
.heading .active { color: #b91822; }
.finder { display: flex; height: 625px; }
.korea { width: 521px; height: 625px; border-radius: 20px 0 0 20px; background: #acacac; }
.city { display: grid; width: 1063px; border: 2px solid #b91822; border-radius: 0 20px 20px 0; }
.city h2 { grid-area: 1 / 1; margin: 89px 0 0 102px; font-size: 44px; font-weight: 300; line-height: 60px; letter-spacing: .9px; color: #b91822; }
.seoul { grid-area: 1 / 1; width: 1059px; height: 621px; }
.ink { fill: none; stroke: #231f20; stroke-width: 2px; }
.ink use[fill] { fill: #fff; }
.ink path, .pins ellipse, #land path, #land ellipse, #seoul-land { vector-effect: non-scaling-stroke; }
.ink .picked { fill: #b91822; }
.pins { fill: #e1e1e1; stroke: #000; stroke-width: 2px; }

/* store list */
.results { display: flex; gap: 20px; margin-top: 82px; }
.stores { width: 1062px; }
.store-head { display: grid; grid-template-columns: 249px 563px 250px; align-items: center; height: 85px; border: solid #b91822; border-width: 2px 0; text-align: center; font-size: 30px; letter-spacing: 1px; }
.store-head span { height: 52px; margin-bottom: 1px; line-height: 46px; }
.store-head span + span { border-left: 2px solid #b91822; }
.store-rows { margin-top: 9px; border-top: 2px solid #e1e1e1; }
.store { display: grid; grid-template-columns: 251px 562px 249px; height: 86.8px; border-bottom: 2px solid #e1e1e1; font-size: 25px; line-height: 40px; letter-spacing: 1.7px; text-align: center; }
.store span:nth-child(2) { padding-left: 20px; text-align: left; }
.store span:nth-child(3) { letter-spacing: .5px; }
.r1 { padding-top: 18.500px; } .r2 { padding-top: 20px; } .r3 { padding-top: 24px; }
.r4 { padding-top: 12.500px; } .r5 { padding-top: 20.500px; } .r6 { padding-top: 26px; }
.pages { display: flex; gap: 41.500px; margin: 34px 0 0 343px; }
.pages a { width: 42px; height: 42px; background: #e1e1e1; color: #000; font-size: 28px; line-height: 38px; text-align: center; }
.next { width: 42px; height: 42px; background: #acacac; clip-path: polygon(0 0, 100% 50%, 0 100%); }

/* directions */
.directions { width: 502px; }
.directions h3 { height: 86px; padding-left: 31px; background: #e1e1e1; font-size: 25.500px; font-weight: 300; line-height: 86px; letter-spacing: 1.9px; }
.street { position: relative; }
.street > svg { width: 502px; height: 541px; }
#streets path { stroke-linejoin: round; }
.casing { stroke: #c6c3bd; }
.fillroad { stroke: #fff; }
.w18 { stroke-width: 16px; } .w26 { stroke-width: 24px; } .w38 { stroke-width: 36px; } .w46 { stroke-width: 50px; }
.casing { filter: drop-shadow(0 0 1px #aaa8a2); }
.plots { fill: none; stroke: #d8d5cf; stroke-width: 2px; }
.place { font-size: 43px; font-weight: 500; fill: #3d3d3d; stroke: #fff; stroke-width: 6px; stroke-linejoin: round; paint-order: stroke; }
.place .hospital { fill: #7a2b3b; }
.place .road { font-size: 38px; fill: #7478b8; font-weight: 400; }
.place .line { font-size: 36px; fill: #8b5a50; }
.place .block { font-size: 32px; fill: #8a765c; font-weight: 400; }
.enlarge { position: absolute; left: 313px; top: 457px; display: flex; align-items: center; gap: 10px; width: 156px; height: 52px; padding-left: 13px; border-radius: 9px; background: #e1e1e1; font-size: 25.500px; letter-spacing: 1.5px; line-height: 44px; }
.enlarge span { height: 50px; }
.enlarge svg { width: 21px; height: 21px; }

/* footer */
.footer { display: flex; height: 396px; margin-top: 116px; background: #bcc4c3; color: #595757; }
.nestle { width: 275px; height: 121px; margin: 124px 56px 0 679px; }
.company { width: 919px; padding-top: 74px; font-size: 25px; line-height: 40px; }
.policy { padding-left: 90px; letter-spacing: 1.75px; }
address { margin-top: 35px; font-style: normal; line-height: 30px; letter-spacing: 1.3px; }
address > span { display: block; }
.l1 { letter-spacing: 1.72px; }
.l3 { letter-spacing: 1.5px; }
.l4 { letter-spacing: .6px; }
.l5 { letter-spacing: 1.5px; }
.mail { letter-spacing: .27px; }
.badges { padding-top: 58px; }
.kcp { width: 350px; height: 115px; }
.award { width: 246px; height: 128px; margin: 10px 0 0 52px; }
```
